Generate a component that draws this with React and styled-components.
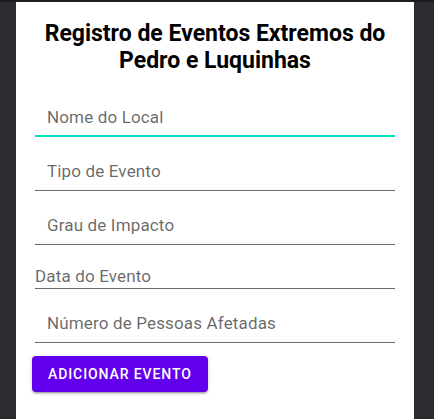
import React from "react";
import styled, { createGlobalStyle } from "styled-components";

const GlobalStyle = createGlobalStyle`
  html, body {
    margin: 0;
    padding: 0;
    background-color: #2b2c30;
    font-family: Roboto, "Liberation Sans", sans-serif;
  }
`;

const Page = styled.div`
  min-height: 100vh;
  box-sizing: border-box;
  border-top: 2px solid #1d1e21;
`;

const Panel = styled.div`
  width: 398px;
  margin-left: 16px;
  min-height: calc(100vh - 2px);
  background-color: #fff;
  padding: 18px 16px 0;
  box-sizing: border-box;
`;

const Title = styled.h1`
  margin: 0 0 9px;
  font-size: 23px;
  line-height: 27px;
  font-weight: 700;
  text-align: center;
  color: #000;
`;

const Form = styled.form`
  display: flex;
  flex-direction: column;
  align-items: flex-start;
`;

const Input = styled.input`
  box-sizing: border-box;
  width: 360px;
  margin: 0 3px;
  border: none;
  border-bottom: ${(p) => (p.$focused ? "2px solid #03dac5" : "1px solid #6b6b6b")};
  padding: ${(p) =>
    p.$compact
      ? "21px 0 2px"
      : p.$focused
      ? "24px 12px 8px"
      : "24px 12px 9px"};
  font-family: Roboto, "Liberation Sans", sans-serif;
  font-size: 17px;
  line-height: 20px;
  letter-spacing: 0.15px;
  color: rgba(0, 0, 0, 0.87);
  background: transparent;
  outline: none;

  &::placeholder {
    color: rgba(0, 0, 0, 0.6);
    opacity: 1;
  }
`;

const Button = styled.button`
  margin-top: 13px;
  height: 36px;
  padding: 0 16px;
  border: none;
  border-radius: 4px;
  background-color: #6200ee;
  color: #fff;
  font-family: Roboto, "Liberation Sans", sans-serif;
  font-size: 14px;
  font-weight: 500;
  letter-spacing: 0.9px;
  text-transform: uppercase;
  box-shadow: 0 3px 1px -2px rgba(0, 0, 0, 0.2), 0 2px 2px 0 rgba(0, 0, 0, 0.14),
    0 1px 5px 0 rgba(0, 0, 0, 0.12);
  cursor: pointer;
`;

function App() {
  return (
    <Page>
      <GlobalStyle />
      <Panel>
        <Title>Registro de Eventos Extremos do Pedro e Luquinhas</Title>
        <Form onSubmit={(e) => e.preventDefault()}>
          <Input $focused placeholder="Nome do Local" />
          <Input placeholder="Tipo de Evento" />
          <Input placeholder="Grau de Impacto" />
          <Input $compact placeholder="Data do Evento" />
          <Input placeholder="Número de Pessoas Afetadas" />
          <Button type="submit">Adicionar Evento</Button>
        </Form>
      </Panel>
    </Page>
  );
}

export default App;
